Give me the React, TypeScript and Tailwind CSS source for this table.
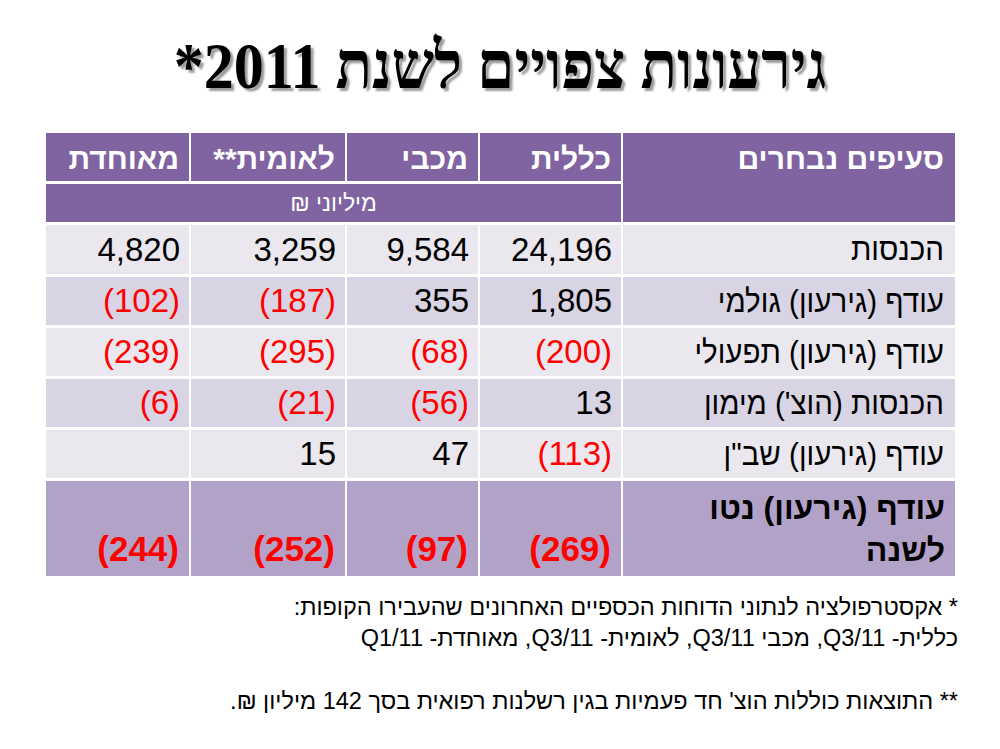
const rows = [
  { label: "הכנסות", vals: ["24,196", "9,584", "3,259", "4,820"], bg: "bg-[#EAE7EF]" },
  { label: "עודף (גירעון) גולמי", vals: ["1,805", "355", "(187)", "(102)"], bg: "bg-[#D9D4E3]" },
  { label: "עודף (גירעון) תפעולי", vals: ["(200)", "(68)", "(295)", "(239)"], bg: "bg-[#EAE7EF]" },
  { label: "הכנסות (הוצ') מימון", vals: ["13", "(56)", "(21)", "(6)"], bg: "bg-[#D9D4E3]" },
  { label: 'עודף (גירעון) שב"ן', vals: ["(113)", "47", "15", ""], bg: "bg-[#EAE7EF]" },
];

const isNeg = (v: string) => v.startsWith("(");

export default function App() {
  return (
    <div dir="rtl" className="w-[1000px] h-[749px] bg-white overflow-hidden font-['Liberation_Sans',Arial,sans-serif]">
      <div className="h-[133px] pt-[36px] text-center">
        <h1 className="inline-block scale-y-[1.1] font-['Liberation_Serif','Times_New_Roman',serif] font-bold text-[60px] leading-none text-black [text-shadow:3px_3px_2px_#9c9c9c]">
          גירעונות צפויים לשנת 2011*
        </h1>
      </div>

      <div className="mr-[45px] w-[909px] grid grid-cols-[332px_141px_131px_154px_143px] grid-rows-[48px_38px_49px_48px_48px_48px_48px_95px] gap-x-[2px] gap-y-[3px]">
        <div className="row-span-2 bg-[#8064A2] text-white font-bold text-[30px] leading-none pr-[11px] pt-[11px]">סעיפים נבחרים</div>
        {["כללית", "מכבי", "לאומית**", "מאוחדת"].map((h) => (
          <div key={h} className="bg-[#8064A2] text-white font-bold text-[30px] leading-none pr-[10px] pt-[11px]">{h}</div>
        ))}
        <div className="col-span-4 bg-[#8064A2] text-white text-[23px] flex items-center justify-center">מיליוני ₪</div>

        {rows.map((r) => (
          <div key={r.label} className="contents">
            <div className={`${r.bg} text-black text-[29.5px] pr-[11px] flex items-center`}>
              <span className="inline-block scale-y-[1.08]">{r.label}</span>
            </div>
            {r.vals.map((v, i) => (
              <div key={i} dir="ltr" className={`${r.bg} text-[33px] pr-[9px] flex items-center justify-end ${isNeg(v) ? "text-[#FF0000]" : "text-black"}`}>
                {v}
              </div>
            ))}
          </div>
        ))}

        <div className="bg-[#B3A2C7] text-black font-bold text-[32px] leading-[42px] pr-[10px] pt-[6px]">
          עודף (גירעון) נטו
          <br />
          לשנה
        </div>
        {["(269)", "(97)", "(252)", "(244)"].map((v) => (
          <div key={v} dir="ltr" className="bg-[#B3A2C7] text-[#FF0000] font-bold text-[35px] leading-none pr-[10px] pb-[10px] flex items-end justify-end">
            {v}
          </div>
        ))}
      </div>

      <div className="mr-[42px] mt-[16px] font-['Liberation_Sans_Narrow','Liberation_Sans',Arial,sans-serif] text-[23.5px] leading-[31px] text-black">
        <p>* אקסטרפולציה לנתוני הדוחות הכספיים האחרונים שהעבירו הקופות:</p>
        <p>כללית- Q3/11, מכבי Q3/11, לאומית- Q3/11, מאוחדת- Q1/11</p>
        <p className="mt-[32px]">** התוצאות כוללות הוצ' חד פעמיות בגין רשלנות רפואית בסך 142 מיליון ₪.</p>
      </div>
    </div>
  );
}
